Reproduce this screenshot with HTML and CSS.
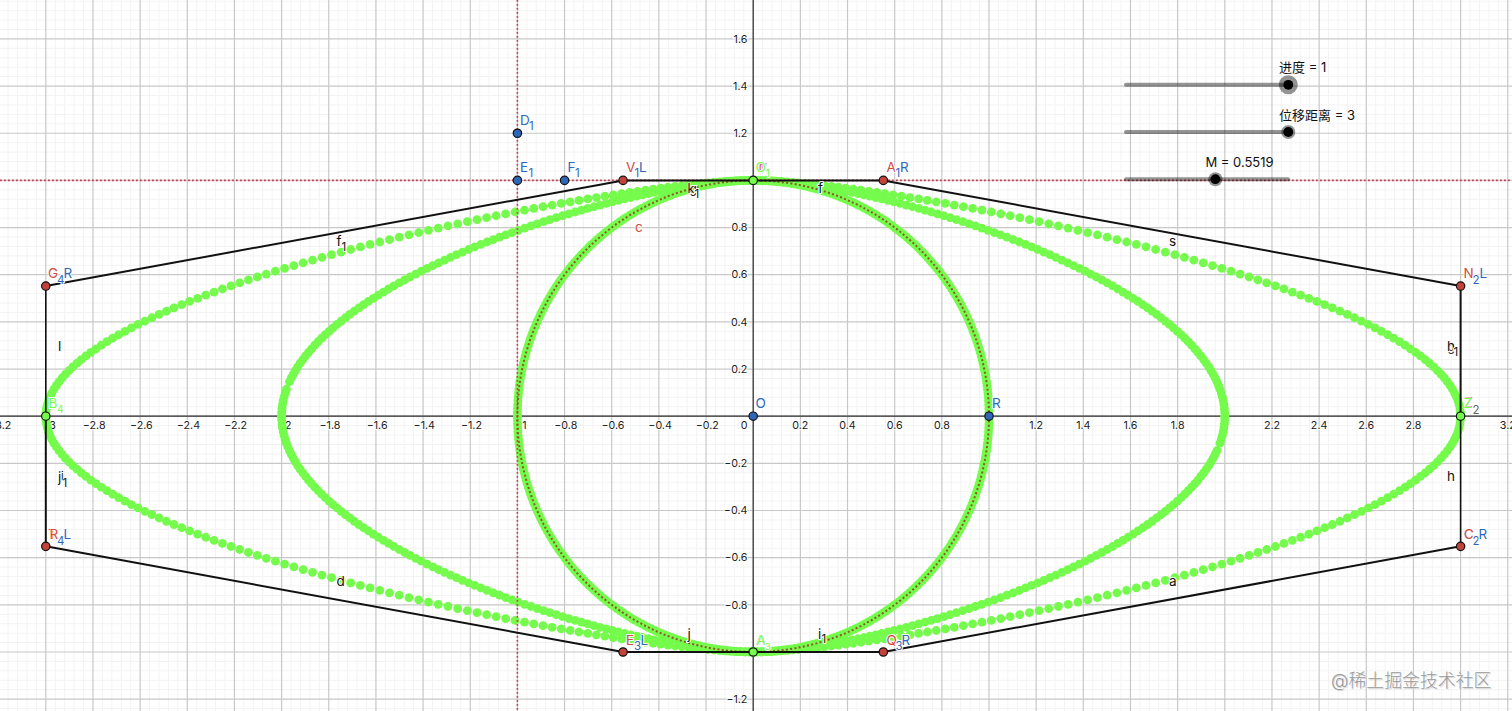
FILE: index.html
```
<!DOCTYPE html>
<html lang="zh">
<head>
    <meta charset="UTF-8">
    <meta name="viewport" content="width=device-width, initial-scale=1.0">
    <title>Bezier</title>
    <link rel="stylesheet" href="styles.css">
</head>
<body>
    <svg class="board" width="1512" height="711" viewBox="0 0 1512 711">
        <g id="grid"></g>
        <g id="axis"></g>
        <g id="trace"></g>
        <g id="shape"></g>
        <g id="slider"></g>
        <g id="points"></g>
        <g id="labels"></g>
        <text class="watermark" x="1331" y="687">@稀土掘金技术社区</text>
    </svg>
    <script src="main.js"></script>
</body>
</html>
```
FILE: styles.css
```
*{
    margin: 0;
    padding: 0;
}
body,html{
    background-color: #fff;
    overflow: hidden;
}
.board{
    display: block;
    font-family: Inter, "Noto Sans CJK SC", sans-serif;
}
.minor{
    stroke: #f3f3f3;
    stroke-width: 1;
}
.major{
    stroke: #c8c8c8;
    stroke-width: 1.2;
}
.axis{
    stroke: #303030;
    stroke-width: 1.2;
}
.num{
    font-size: 10.7px;
    fill: #1c1c1c;
    stroke: #fff;
    stroke-width: 2px;
    paint-order: stroke;
}
.dot{
    fill: #75fb4c;
}
.line{
    stroke: #111;
    stroke-width: 2;
}
.thin{
    stroke: #111;
    stroke-width: 1.6;
}
.dash{
    fill: none;
    stroke: #c5404f;
    stroke-width: 1.6;
    stroke-dasharray: 1.8 2.2;
}
.circle{
    stroke: #8a5a24;
    stroke-width: 2;
    stroke-dasharray: 2 2.3;
}
.pt{
    stroke: #111;
    stroke-width: 1.2;
}
.blue{
    fill: #2f66b8;
}
.red{
    fill: #c3423a;
}
.green{
    fill: #75fb4c;
}
.black{
    fill: #111;
}
.gray{
    fill: #666;
}
.label{
    font-size: 13.5px;
    stroke: #fff;
    stroke-width: 2px;
    paint-order: stroke;
}
.label.red{
    fill: #d24a42;
}
.label.over{
    stroke-width: .9px;
}
.track{
    stroke: #000;
    stroke-opacity: .42;
    stroke-width: 4;
    stroke-linecap: round;
}
.halo{
    fill: #000;
    fill-opacity: .42;
}
.knob{
    fill: #000;
}
.title{
    font-size: 13px;
    fill: #111;
}
.watermark{
    font-size: 17.9px;
    font-weight: 300;
    fill: #999;
    text-shadow: -1px -1px 0 #fff, 1px 1px 1px #ccc;
}
```
FILE: main.js
```
var NS = "http://www.w3.org/2000/svg";
var ox = 753.2, oy = 416.2, unit = 235.8;
var M = 0.5519;

function add(id, tag, cls, attrs, text) {
    var el = document.createElementNS(NS, tag);
    el.setAttribute("class", cls);
    for (var k in attrs) el.setAttribute(k, attrs[k]);
    if (text) el.textContent = text;
    document.getElementById(id).appendChild(el);
}
function X(x) { return ox + x * unit; }
function Y(y) { return oy - y * unit; }
function line(id, cls, x1, y1, x2, y2) {
    add(id, "line", cls, {x1: x1, y1: y1, x2: x2, y2: y2});
}

// grid
var step = unit / 5;
for (var i = -85; i < 85; i++) {
    if (i % 5 == 0) continue;
    line("grid", "minor", ox + i * step / 5, 0, ox + i * step / 5, 711);
    line("grid", "minor", 0, oy + i * step / 5, 1512, oy + i * step / 5);
}
for (i = -16; i <= 16; i++) {
    line("grid", "major", ox + i * step, 0, ox + i * step, 711);
    line("grid", "major", 0, oy + i * step, 1512, oy + i * step);
}
line("axis", "axis", 0, oy, 1512, oy);
line("axis", "axis", ox, 0, ox, 711);

for (i = -16; i <= 16; i++) {
    if (i == 0 || i == 5 || i == 10 || i == 15) continue;
    var s = String(Math.abs(i * 2) / 10);
    var dx = i < 0 ? (i % 5 == 0 ? 3.4 : 1.2) : 0;
    add("axis", "text", "num", {x: ox + i * step + dx, y: 429.4, "text-anchor": "middle"}, (i < 0 ? "−" : "") + s);
}
add("axis", "text", "num", {x: 744, y: 429.4, "text-anchor": "middle"}, "0");
for (i = -6; i <= 8; i++) {
    if (i == 0 || Math.abs(i) == 5) continue;
    add("axis", "text", "num", {x: 747.4, y: oy - i * step + 3.7, "text-anchor": "end"}, (i < 0 ? "−" : "") + Math.abs(i * 2) / 10);
}

// traces of the moving points
function trace(d, sx, sy) {
    for (var n = 0; n <= 100; n++) {
        if (d == 2 && n == 92 && sx != sy) continue;
        var t = n / 100, u = 1 - t;
        var x = 3 * u * u * t * M + 3 * u * t * t * d + t * t * t * d;
        var y = u * u * u + 3 * u * u * t + 3 * u * t * t * M;
        add("trace", "circle", "dot", {cx: X(x * sx), cy: Y(y * sy), r: 4.4});
    }
}
[1, 2, 3].forEach(function (d) {
    trace(d, 1, 1);
    trace(d, 1, -1);
    trace(d, -1, 1);
    trace(d, -1, -1);
});

line("shape", "dash", 0, Y(1), 1512, Y(1));
line("shape", "dash", X(-1), 0, X(-1), 711);
add("shape", "circle", "dash circle", {cx: ox, cy: oy, r: unit});
[
    ["line", -M, 1, M, 1], ["line", M, 1, 3, M], ["line", 3, M, 3, 0], ["thin", 3, 0, 3, -M],
    ["line", 3, -M, M, -1], ["line", M, -1, -M, -1], ["line", -M, -1, -3, -M],
    ["line", -3, -M, -3, 0], ["thin", -3, 0, -3, M], ["line", -3, M, -M, 1]
].forEach(function (l) {
    line("shape", l[0], X(l[1]), Y(l[2]), X(l[3]), Y(l[4]));
});

// sliders
[[84.8, 1288.3, 9.5], [132, 1288.3, 7], [179.2, 1215.4, 7]].forEach(function (a) {
    line("slider", "track", 1126, a[0], 1288, a[0]);
    add("slider", "circle", "halo", {cx: a[1], cy: a[0], r: a[2]});
    add("slider", "circle", "knob", {cx: a[1], cy: a[0], r: 4.9});
});
add("slider", "text", "title", {x: 1279, y: 72.4}, "进度 = 1");
add("slider", "text", "title", {x: 1279, y: 119.6}, "位移距离 = 3");
add("slider", "text", "title", {x: 1205.5, y: 166.6, textLength: 68}, "M = 0.5519");

[
    ["blue", 0, 0], ["blue", 1, 0], ["blue", -1, 1], ["blue", -1, 1.2], ["blue", -0.8, 1],
    ["red", -M, 1], ["red", M, 1], ["red", -M, -1], ["red", M, -1],
    ["red", -3, M], ["red", -3, -M], ["red", 3, M], ["red", 3, -M],
    ["green", 0, 1], ["green", 0, -1], ["green", 3, 0], ["green", -3, 0]
].forEach(function (p) {
    add("points", "circle", "pt " + p[0], {cx: X(p[1]), cy: Y(p[2]), r: 4.2});
});

// class, text, x, y, font size
[
    ["blue", "O", 755.5, 408], ["blue", "R", 992, 408],
    ["blue", "D", 520, 125], ["blue", "1", 529, 130, 11.5],
    ["blue", "E", 520, 172], ["blue", "1", 528.5, 177, 11.5],
    ["blue", "F", 567.5, 172], ["blue", "1", 575, 177, 11.5],
    ["red", "V", 626, 172], ["blue", "1", 634.5, 177, 11.5], ["blue", "L", 639, 172],
    ["red", "A", 886.5, 172], ["blue", "1", 895.5, 177, 11.5], ["blue", "R", 900, 172],
    ["red", "W", 756, 171, 11], ["green", "O", 755.5, 172], ["red over", "r", 759, 170, 10], ["green", "1", 765.5, 177, 11],
    ["blue", "4", 57, 284, 11.5], ["red", "G", 48, 278], ["blue", "R", 63.5, 278],
    ["blue", "4", 57, 544.5, 11.5], ["red", "T", 48, 539], ["red over", "R", 49.5, 539], ["blue", "L", 63.5, 539],
    ["red", "N", 1463.5, 278], ["blue", "2", 1472.5, 284, 11.5], ["blue", "L", 1479.5, 278],
    ["blue", "C", 1463.5, 539], ["red over", "C", 1464, 539], ["blue", "2", 1472.5, 544.5, 11.5], ["blue", "R", 1478.5, 539],
    ["red", "E", 626, 644.5], ["blue", "3", 634, 650, 11.5], ["blue", "L", 640.5, 644.5],
    ["red", "Q", 886.5, 644.5], ["blue", "3", 895.5, 650, 11.5], ["blue", "R", 901.5, 644.5],
    ["red", "A", 756, 644.5], ["green over", "A", 756.5, 644.5], ["green", "3", 765, 649.5, 9],
    ["green", "B", 48.5, 408], ["green", "4", 57, 413, 10],
    ["red", "Z", 1464.5, 407], ["green over", "Z", 1463.5, 408], ["gray", "2", 1472.5, 413.5, 11.5],
    ["red", "c", 635, 232],
    ["black", "f", 336.5, 245.5], ["black", "1", 341.5, 250.5, 11.5],
    ["black", "g", 689.5, 193, 12], ["black over", "k", 687.5, 192.5, 12.5], ["black", "1", 694.5, 197.5, 11.5],
    ["black", "f", 818, 192.5], ["black", "s", 1169, 245.5],
    ["black", "l", 58, 351], ["black", "i", 61, 480, 11], ["black over", "j", 58, 481.5], ["black over", "1", 62.5, 486.5, 11.5],
    ["black", "d", 336.5, 586], ["black", "a", 1169, 586],
    ["black", "j", 687.5, 639], ["black", "i", 818, 639], ["black", "1", 821.5, 643, 11.5],
    ["black", "g", 1447.5, 351, 12], ["black over", "h", 1447, 351], ["black", "1", 1453.5, 356, 11.5],
    ["black", "h", 1447, 481]
].forEach(function (l) {
    add("labels", "text", "label " + l[0], {x: l[2], y: l[3], style: l[4] ? "font-size:" + l[4] + "px" : ""}, l[1]);
});
```
